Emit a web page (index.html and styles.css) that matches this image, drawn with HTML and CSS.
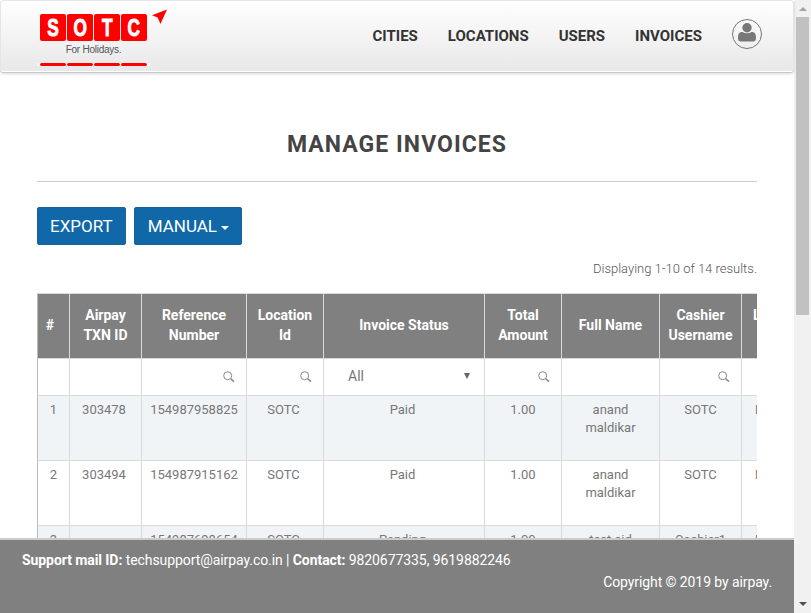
FILE: index.html
```
<!DOCTYPE html>
<html lang="en">
<head>
<meta charset="utf-8">
<title>Manage Invoices</title>
<link rel="stylesheet" href="styles.css">
</head>
<body>
<svg class="defs" aria-hidden="true"><symbol id="search" viewBox="0 0 12 12"><circle cx="4.7" cy="4.7" r="4" fill="none" stroke="#888" stroke-width="1"/><path d="M7.7 7.7 L11 10.6" stroke="#888" stroke-width="1.5" fill="none"/></symbol></svg>
<div class="page">
  <header class="navbar">
    <div class="logo">
      <div class="tiles"><span><b>S</b></span><span><b>O</b></span><span><b>T</b></span><span><b>C</b></span></div>
      <svg class="plane" viewBox="0 0 16 16"><path d="M16 0 L0 6 L6 8.5 L9 15.5 Z" fill="#f00"/></svg>
      <div class="tagline">For Holidays.</div>
      <div class="dashes"><i></i><i></i><i></i><i></i></div>
    </div>
    <nav class="menu"><a>CITIES</a><a>LOCATIONS</a><a>USERS</a><a>INVOICES</a></nav>
    <div class="avatar"><svg viewBox="0 0 18 19"><path d="M4.3 9 C1 9 0 11 0 15 Q0 18.6 3 18.6 H15 Q18 18.6 18 15 C18 11 17 9 13.7 9 Q9 11.6 4.3 9Z" fill="#777"/><circle cx="9" cy="4.8" r="4.7" fill="#777"/></svg></div>
  </header>
  <main class="content">
    <h1>MANAGE INVOICES</h1>
    <div class="buttons"><button>EXPORT</button><button class="drop">MANUAL<i class="caret"></i></button></div>
    <p class="summary">Displaying 1-10 of 14 results.</p>
    <div class="grid">
      <div class="row head"><div>#</div><div>Airpay<br>TXN ID</div><div>Reference<br>Number</div><div>Location<br>Id</div><div>Invoice Status</div><div>Total<br>Amount</div><div>Full Name</div><div>Cashier<br>Username</div><div class="last">L</div></div>
      <div class="row filter"><div></div><div></div><div><svg><use href="#search"/></svg></div><div><svg><use href="#search"/></svg></div><div class="select"><span>All</span><i></i></div><div><svg><use href="#search"/></svg></div><div></div><div><svg><use href="#search"/></svg></div><div></div></div>
      <div class="row odd"><div>1</div><div>303478</div><div>154987958825</div><div>SOTC</div><div>Paid</div><div>1.00</div><div>anand<br>maldikar</div><div>SOTC</div><div class="last">M</div></div>
      <div class="row"><div>2</div><div>303494</div><div>154987915162</div><div>SOTC</div><div>Paid</div><div>1.00</div><div>anand<br>maldikar</div><div>SOTC</div><div class="last">M</div></div>
      <div class="row odd"><div>3</div><div></div><div>154987698654</div><div>SOTC</div><div>Pending</div><div>1.00</div><div>test sid</div><div>Cashier1</div><div class="last">M</div></div>
    </div>
  </main>
  <footer class="footer">
    <div class="support"><b>Support mail ID:</b> techsupport@airpay.co.in | <b>Contact:</b> 9820677335, 9619882246</div>
    <div class="copyright">Copyright © 2019 by airpay.</div>
  </footer>
</div>
<div class="scrollbar"><i class="up"></i><div class="thumb"></div><i class="down"></i></div>
</body>
</html>
```
FILE: styles.css
```
* { box-sizing: border-box; }
body { margin: 0; height: 613px; display: flex; overflow: hidden; font-family: Roboto, "Liberation Sans", sans-serif; background: #fff; color: #777; }
.defs { display: none; }
.page { width: 794px; height: 613px; display: flex; flex-direction: column; }
.navbar { height: 72px; flex: none; display: flex; position: relative; z-index: 1; border: 1px solid #e5e5e5; border-bottom-color: #fff; border-radius: 4px; background: linear-gradient(#fff, #e8e8e8); box-shadow: 0 1px 0 #c8c8c8, 0 2px 3px rgba(0,0,0,.15); }
.logo { position: relative; width: 130px; margin: 13px 0 0 39px; flex: none; }
.tiles { display: flex; gap: 1px; width: 107px; }
.tiles span { width: 26px; height: 27px; border-radius: 2px; background: #f00; color: #fff; display: flex; justify-content: center; }
.tiles b { font: bold 24px/27px "Liberation Sans", sans-serif; -webkit-text-stroke: 1px #fff; transform: scaleX(.72); }
.plane { position: absolute; left: 112px; top: -5px; width: 15px; height: 16px; }
.tagline { width: 107px; margin-top: 3px; text-align: center; font: 10px/12px "Liberation Sans", sans-serif; letter-spacing: -.25px; color: #555; }
.dashes { display: flex; gap: 1px; margin: 7px 0 0 -3px; padding: 0 3px; width: 113px; height: 3px; background: #fff; }
.dashes i { flex: 1; height: 3px; border-radius: 1.5px; background: #f00; }
.menu { display: flex; gap: 30px; margin-left: auto; padding-top: 25px; font-size: 15px; line-height: 20px; font-weight: 700; color: #333; }
.avatar { width: 30px; height: 30px; margin: 18px 31px 0 30px; border: 1px solid #777; border-radius: 50%; }
.avatar svg { display: block; width: 18px; height: 19px; margin: 3px 0 0 5px; }
.content { flex: 1; min-height: 0; overflow: hidden; padding: 55px 37px 0; }
h1 { margin: 0 0 25px; height: 55px; border-bottom: 1px solid #ccc; text-align: center; font-size: 23px; line-height: 36px; font-weight: 700; letter-spacing: 1.05px; color: #444; }
.buttons { display: flex; gap: 8px; }
button { height: 38px; padding: 0 12px; border: 1px solid #1b6299; border-radius: 2px; background: #1068a8; color: #fff; font: 17px/36px Roboto, sans-serif; white-space: nowrap; }
.drop { padding: 0 12px 0 13px; }
.caret { display: inline-block; margin-left: 4px; vertical-align: 2px; border: 4px solid transparent; border-top-color: #fff; border-bottom: 0; }
.summary { margin: 14px 0; height: 20px; text-align: right; font-size: 13px; line-height: 20px; font-weight: 300; color: #555; }
.grid { overflow: hidden; }
.row { display: grid; grid-template-columns: 32px 72px 105px 77px 161px 77px 98px 82px 100px; width: 804px; height: 65px; text-align: center; font-size: 13px; line-height: 18px; }
.row > div { border-left: 1px solid #d8dadb; border-top: 1px solid #d8dadb; padding: 5px 3px 0 0; }
.row > div:first-child { border-left-color: #bbb; padding-right: 0; }
.row > div:nth-child(3), .row > div:nth-child(6), .row > div:nth-child(7), .row > div:nth-child(8) { padding-right: 0; }
.row.odd > div { background: #f0f4f7; }
.row.head > div { display: flex; align-items: center; justify-content: center; padding: 0 0 2px; background: #808080; color: #fff; font-size: 14px; line-height: 20px; font-weight: 700; }
.row.head > div:first-child { padding-right: 7px; }
.row.head > div.last { align-items: flex-start; justify-content: flex-start; padding: 11px 0 0 11px; }
.row > div.last { text-align: left; padding-left: 13px; }
.row.filter { height: 37px; }
.row.filter > div { display: flex; justify-content: flex-end; padding: 11.5px 11px 0 0; }
.row.filter svg { width: 12px; height: 12px; }
.row.filter > .select { justify-content: space-between; padding: 7px 14px 0 24px; font-size: 14px; line-height: 20px; }
.select i { margin-top: 7px; width: 0; height: 0; border: 3px solid transparent; border-top: 6px solid #666; border-bottom: 0; }
.footer { height: 75px; flex: none; border-top: 2px solid #ccc; background: #808080; padding: 9px 22px; color: #fff; font-size: 14px; line-height: 22px; position: relative; }
.support { letter-spacing: -.075px; }
.copyright { text-align: right; letter-spacing: -.09px; }
.scrollbar { width: 17px; height: 613px; background: #f1f1f1; display: flex; flex-direction: column; align-items: center; }
.up { margin: 7px 0 6px; border: 4px solid transparent; border-bottom: 4px solid #a3a3a3; border-top: 0; }
.thumb { width: 13px; height: 298px; background: #c1c1c1; }
.down { margin: auto 0 7px; border: 4px solid transparent; border-top-color: #505050; border-bottom: 0; }
```
